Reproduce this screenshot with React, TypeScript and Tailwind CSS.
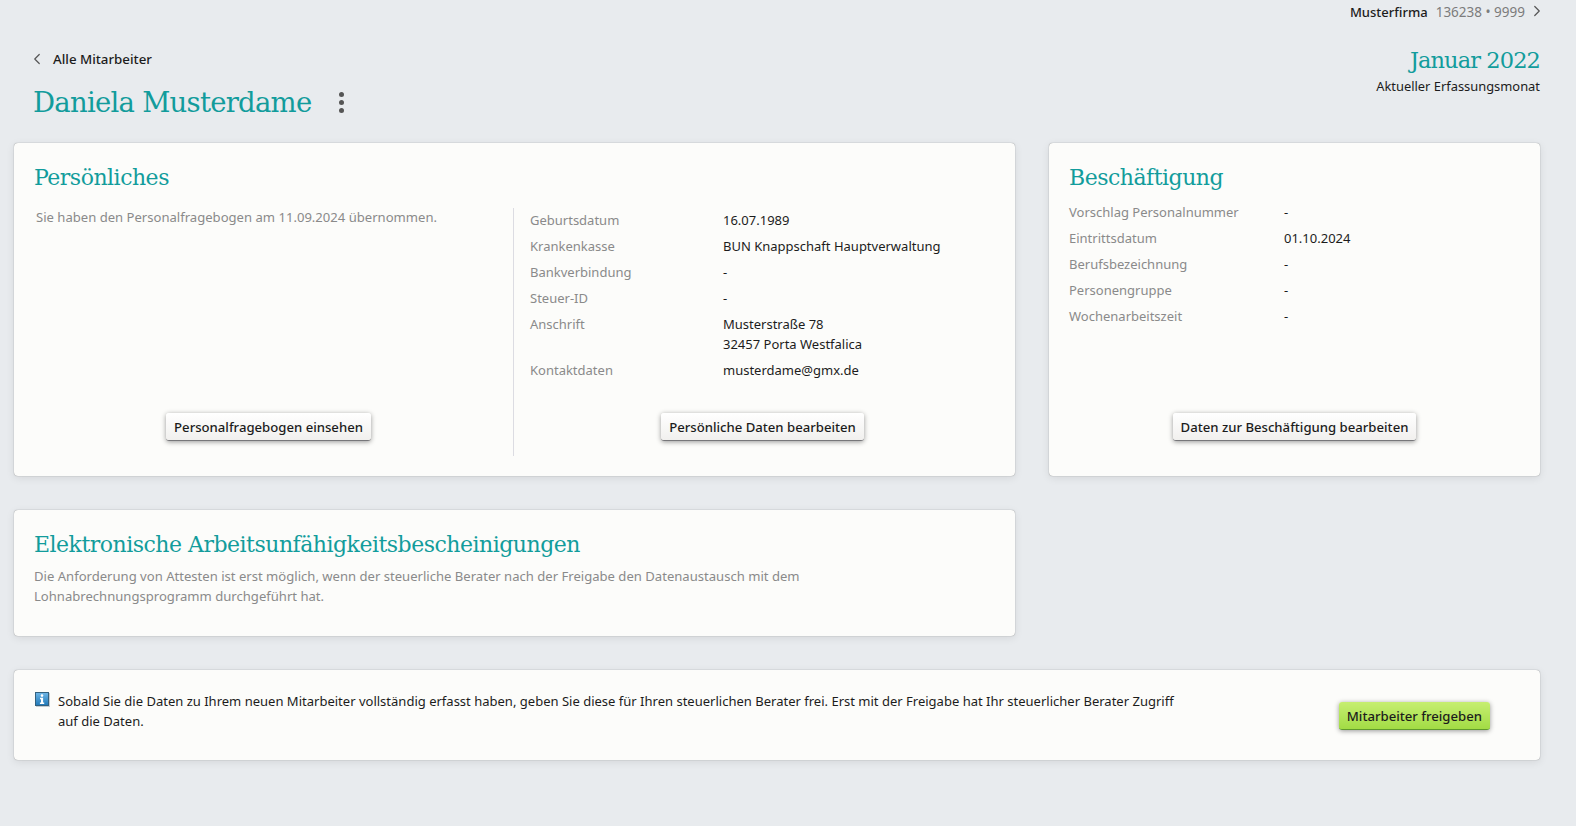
import { ChevronLeft, ChevronRight } from 'lucide-react';

const SERIF = "font-['DejaVu_Serif',serif]";

const PERSONAL: { label: string; value: string[] }[] = [
  { label: 'Geburtsdatum', value: ['16.07.1989'] },
  { label: 'Krankenkasse', value: ['BUN Knappschaft Hauptverwaltung'] },
  { label: 'Bankverbindung', value: ['-'] },
  { label: 'Steuer-ID', value: ['-'] },
  { label: 'Anschrift', value: ['Musterstraße 78', '32457 Porta Westfalica'] },
  { label: 'Kontaktdaten', value: ['musterdame@gmx.de'] },
];

const JOB = [
  { label: 'Vorschlag Personalnummer', value: '-' },
  { label: 'Eintrittsdatum', value: '01.10.2024' },
  { label: 'Berufsbezeichnung', value: '-' },
  { label: 'Personengruppe', value: '-' },
  { label: 'Wochenarbeitszeit', value: '-' },
];

function Card({ className, children }: { className: string; children: React.ReactNode }) {
  return (
    <section className={`rounded bg-[#fcfcfa] shadow-[0_0_1px_rgba(0,0,0,0.5),0_2px_8px_rgba(0,0,0,0.09)] ${className}`}>
      {children}
    </section>
  );
}

function Title({ children }: { children: React.ReactNode }) {
  return <h2 className={`${SERIF} text-[22px] leading-[30px] tracking-[-0.5px] text-[#129c9c]`}>{children}</h2>;
}

function Btn({ children }: { children: React.ReactNode }) {
  return (
    <button className="h-[28px] px-2 rounded-[3px] bg-gradient-to-b from-white to-[#f1f0ee] border-b border-[#77777a] shadow-[0_1px_5px_rgba(0,0,0,0.4)] text-[13.15px] text-[#1c1c1c] font-medium">
      {children}
    </button>
  );
}

function InfoIcon() {
  return (
    <svg width="15" height="15" viewBox="0 0 15 15" className="shrink-0 mt-[1px]">
      <defs>
        <linearGradient id="info-bg" x1="0" y1="0" x2="0" y2="1">
          <stop offset="0" stopColor="#6fb6e6" />
          <stop offset="1" stopColor="#1f78b8" />
        </linearGradient>
      </defs>
      <rect x="1" y="1" width="14" height="14" fill="#c4ccd2" />
      <rect x="0.5" y="0.5" width="13" height="13" fill="url(#info-bg)" stroke="#33617f" />
      <circle cx="7" cy="3.6" r="1.3" fill="#fff" />
      <path d="M5 5.8h3.1v4.7h1.1V12H4.9v-1.5H6V7.3H5z" fill="#fff" />
    </svg>
  );
}

export default function App() {
  return (
    <div className="min-h-[826px] bg-[#e8ebee] pl-[14px] pr-[36px] font-['Noto_Sans',sans-serif] text-[13px] leading-[20px] text-[#1c1c1c]">
      <div className="h-[24px] flex items-center justify-end gap-2">
        <span className="font-medium">Musterfirma</span>
        <span className="text-[13.5px] text-[#7c7c7c]">136238 • 9999</span>
        <ChevronRight className="w-[18px] h-[18px] text-[#555] -mt-[3px] -ml-[5px] -mr-[6px]" strokeWidth={1.6} />
      </div>

      <header className="h-[119px] flex justify-between">
        <div className="pl-[19px] pt-[25px]">
          <a className="flex items-center gap-[7px] font-medium text-[13.3px] h-[20px] -ml-[5px]">
            <ChevronLeft className="w-[18px] h-[18px] text-[#555]" strokeWidth={1.6} />
            Alle Mitarbeiter
          </a>
          <div className="flex items-center mt-[15px] h-[36px]">
            <h1 className={`${SERIF} text-[27.5px] leading-[36px] tracking-[-0.75px] text-[#129c9c]`}>Daniela Musterdame</h1>
            <div className="ml-[28px] flex flex-col gap-[3px]">
              <span className="w-[5px] h-[5px] rounded-full bg-[#555]" />
              <span className="w-[5px] h-[5px] rounded-full bg-[#555]" />
              <span className="w-[5px] h-[5px] rounded-full bg-[#555]" />
            </div>
          </div>
        </div>
        <div className="pt-[21px] text-right">
          <div className={`${SERIF} text-[22.5px] leading-[30px] tracking-[-0.9px] text-[#129c9c]`}>Januar 2022</div>
          <div className="mt-[1px] text-[12.9px]">Aktueller Erfassungsmonat</div>
        </div>
      </header>

      <div className="flex gap-[34px]">
        <Card className="w-[1001px] h-[333px] pl-[20px] pt-[20px] pb-[20px] flex flex-col">
          <Title>Persönliches</Title>
          <div className="flex flex-1 mt-[15px]">
            <div className="w-[479px] pl-[2px] flex flex-col justify-between text-[#8a8a8a]">
              <p className="mt-[-1px] text-[13.08px]">Sie haben den Personalfragebogen am 11.09.2024 übernommen.</p>
              <div className="flex justify-center pr-[12px] mb-[15px]"><Btn>Personalfragebogen einsehen</Btn></div>
            </div>
            <div className="flex-1 border-l border-[#dcdce2] pl-[16px] flex flex-col justify-between">
              <dl className="mt-[2px]">
                {PERSONAL.map(row => (
                  <div key={row.label} className="flex mb-[6px]">
                    <dt className="w-[193px] text-[#8a8a8a]">{row.label}</dt>
                    <dd>{row.value.map(line => <div key={line}>{line}</div>)}</dd>
                  </div>
                ))}
              </dl>
              <div className="flex justify-center pl-[8px] pr-[28px] mb-[15px]"><Btn>Persönliche Daten bearbeiten</Btn></div>
            </div>
          </div>
        </Card>

        <Card className="w-[491px] h-[333px] pl-[20px] pt-[20px] pb-[35px] flex flex-col justify-between">
          <div>
            <Title>Beschäftigung</Title>
            <dl className="mt-[9px]">
              {JOB.map(row => (
                <div key={row.label} className="flex mb-[6px]">
                  <dt className="w-[215px] text-[#8a8a8a]">{row.label}</dt>
                  <dd>{row.value}</dd>
                </div>
              ))}
            </dl>
          </div>
          <div className="flex justify-center pr-[20px]"><Btn>Daten zur Beschäftigung bearbeiten</Btn></div>
        </Card>
      </div>

      <Card className="w-[1001px] h-[126px] mt-[34px] pl-[20px] pt-[20px]">
        <Title>Elektronische Arbeitsunfähigkeitsbescheinigungen</Title>
        <p className="text-[#8a8a8a] text-[13.08px] w-[800px] mt-[6px]">
          Die Anforderung von Attesten ist erst möglich, wenn der steuerliche Berater nach der Freigabe den Datenaustausch mit dem Lohnabrechnungsprogramm durchgeführt hat.
        </p>
      </Card>

      <Card className="h-[90px] mt-[34px] pl-[21px] pr-[50px] pt-[21px] flex justify-between">
        <div className="flex gap-[8px]">
          <InfoIcon />
          <p className="w-[1125px] text-[13.02px]">
            Sobald Sie die Daten zu Ihrem neuen Mitarbeiter vollständig erfasst haben, geben Sie diese für Ihren steuerlichen Berater frei. Erst mit der Freigabe hat Ihr steuerlicher Berater Zugriff auf die Daten.
          </p>
        </div>
        <button className="h-[28px] mt-[11px] px-2 rounded-[3px] bg-gradient-to-b from-[#c6ee70] to-[#a2dc44] border-b border-[#5f9a2c] shadow-[0_1px_5px_rgba(0,0,0,0.4)] text-[13.15px] text-[#1c1c1c] font-medium">
          Mitarbeiter freigeben
        </button>
      </Card>
    </div>
  );
}
